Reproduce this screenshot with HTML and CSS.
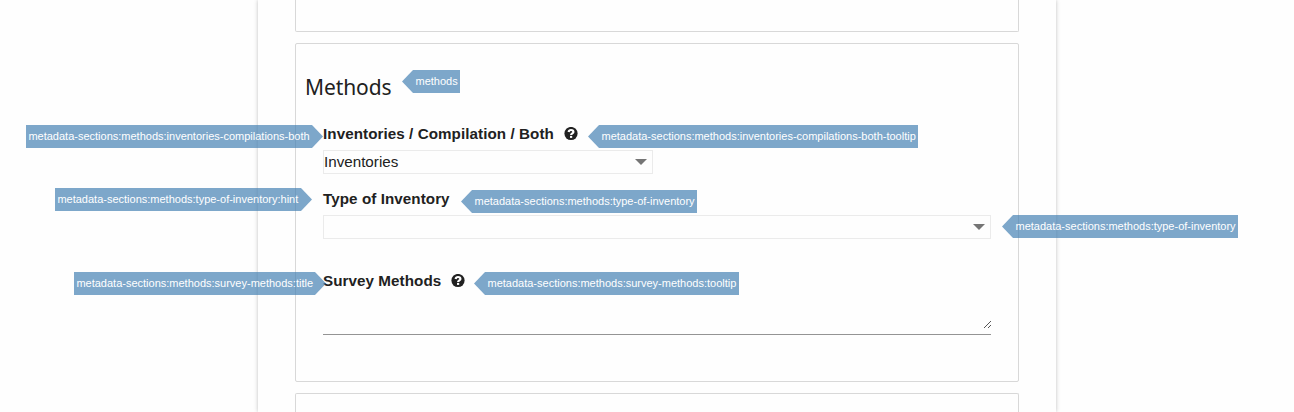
FILE: index.html
```html
<!DOCTYPE html>
<html lang="en">
<head>
<meta charset="utf-8">
<title>Methods</title>
<link rel="stylesheet" href="styles.css">
</head>
<body>
<main class="page">
  <section class="card card-previous"></section>
  <section class="card card-methods">
    <h2 class="card-title"><span class="anchor">Methods<span class="tag tag-right tag-title">methods</span></span></h2>
    <div class="fields">
      <div class="label anchor"><span class="tag tag-left tag-both">metadata-sections:methods:inventories-compilations-both</span>Inventories / Compilation / Both
        <svg class="help" viewBox="0 0 14 14"><circle cx="7" cy="6.500" r="6.600"/><path d="M4.600 5C4.900 3.600 5.800 3 7 3c1.400 0 2.400.8 2.400 1.900C9.400 6.300 7.100 6.400 7.100 7.900"/><path d="M7.100 8.900v2"/></svg>
        <span class="tag tag-right tag-both-tip">metadata-sections:methods:inventories-compilations-both-tooltip</span>
      </div>
      <div class="select select-short"><span>Inventories</span><i class="caret"></i></div>
      <div class="label label-type anchor"><span class="tag tag-left tag-hint">metadata-sections:methods:type-of-inventory:hint</span>Type of Inventory
        <span class="tag tag-right tag-type">metadata-sections:methods:type-of-inventory</span>
      </div>
      <div class="select anchor"><span></span><i class="caret"></i><span class="tag tag-right tag-type-select">metadata-sections:methods:type-of-inventory</span></div>
      <div class="label label-survey anchor"><span class="tag tag-left tag-survey">metadata-sections:methods:survey-methods:title</span>Survey Methods
        <svg class="help" viewBox="0 0 14 14"><circle cx="7" cy="6.500" r="6.600"/><path d="M4.600 5C4.900 3.600 5.800 3 7 3c1.400 0 2.400.8 2.400 1.900C9.400 6.300 7.100 6.400 7.100 7.900"/><path d="M7.100 8.900v2"/></svg>
        <span class="tag tag-right tag-survey-tip">metadata-sections:methods:survey-methods:tooltip</span>
      </div>
      <div class="textarea"><svg class="grip" viewBox="0 0 8 8"><path d="M.5 7.500l7-7M4.500 7.500l3-3"/></svg></div>
    </div>
  </section>
  <section class="card card-next"></section>
</main>
</body>
</html>
```
FILE: styles.css
```css
* { box-sizing: border-box; }
body {
  margin: 0;
  height: 412px;
  overflow: hidden;
  background: #fefefe;
  color: #212121;
  font: 15.2px/18px "Liberation Sans", Arial, sans-serif;
}
.page {
  width: 798px;
  height: 412px;
  margin-left: 258px;
  padding: 0 37px;
  background: #fefefe;
  box-shadow: 0 0 4px rgba(0, 0, 0, .25);
}
.card {
  width: 724px;
  border: 1px solid #d8d8d8;
  border-radius: 2px;
}
.card-previous { height: 32px; border-top: 0; border-radius: 0 0 2px 2px; }
.card-methods { height: 339px; margin-top: 11px; padding: 28px 27px 0 9px; }
.card-next { height: 19px; margin-top: 11px; border-bottom: 0; border-radius: 2px 2px 0 0; }
.card-title {
  margin: 0;
  height: 53px;
  font: 400 21px/30px "Noto Sans", sans-serif;
  letter-spacing: -.1px;
}
.anchor { position: relative; }
.fields { padding-left: 18px; }
.label {
  display: flex;
  align-items: center;
  height: 18px;
  font-weight: 700;
  letter-spacing: .07px;
  white-space: nowrap;
}
.label-type { margin-top: 16px; }
.label-survey { margin-top: 33px; }
.help { width: 14px; height: 14px; margin-left: 10px; }
.help circle { fill: #212121; }
.help path { fill: none; stroke: #fff; stroke-width: 2.2; }
.select {
  display: flex;
  justify-content: space-between;
  align-items: center;
  width: 668px;
  height: 24px;
  margin-top: 7px;
  padding: 0 5px 0 0;
  border: 1px solid #ebebeb;
}
.select-short { width: 330px; }
.caret {
  border: 6px solid transparent;
  border-top: 6px solid #757575;
  border-bottom: 0;
}
.textarea {
  display: flex;
  align-items: flex-end;
  justify-content: flex-end;
  width: 668px;
  height: 45px;
  padding-bottom: 5px;
  border-bottom: 1px solid #949494;
}
.grip { width: 8px; height: 8px; shape-rendering: crispEdges; }
.grip path { fill: none; stroke: #555; stroke-width: 1; }

/* translation key annotations over the form */
.tag {
  position: absolute;
  z-index: 1;
  height: 23px;
  background: steelblue;
  color: #fff;
  font: 400 11px/23px "Liberation Sans", Arial, sans-serif;
  letter-spacing: 0;
  white-space: nowrap;
  opacity: .7;
}
.tag-right { padding-left: 13.5px; clip-path: polygon(0 50%, 11px 0, 100% 0, 100% 100%, 11px 100%); }
.tag-left { padding-left: 2.4px; clip-path: polygon(0 0, calc(100% - 11px) 0, 100% 50%, calc(100% - 11px) 100%, 0 100%); }
.tag-title { left: 97px; top: -3px; width: 58px; }
.tag-both { left: -297px; top: 0; width: 297px; }
.tag-both-tip { left: 265px; top: 0; width: 330px; }
.tag-hint { left: -268px; top: -2px; width: 257px; }
.tag-type { left: 138px; top: 0; width: 236px; }
.tag-type-select { left: 678px; top: -1px; width: 236px; }
.tag-survey { left: -249px; top: 0; width: 252px; }
.tag-survey-tip { left: 151px; top: 0; width: 265px; }
```
